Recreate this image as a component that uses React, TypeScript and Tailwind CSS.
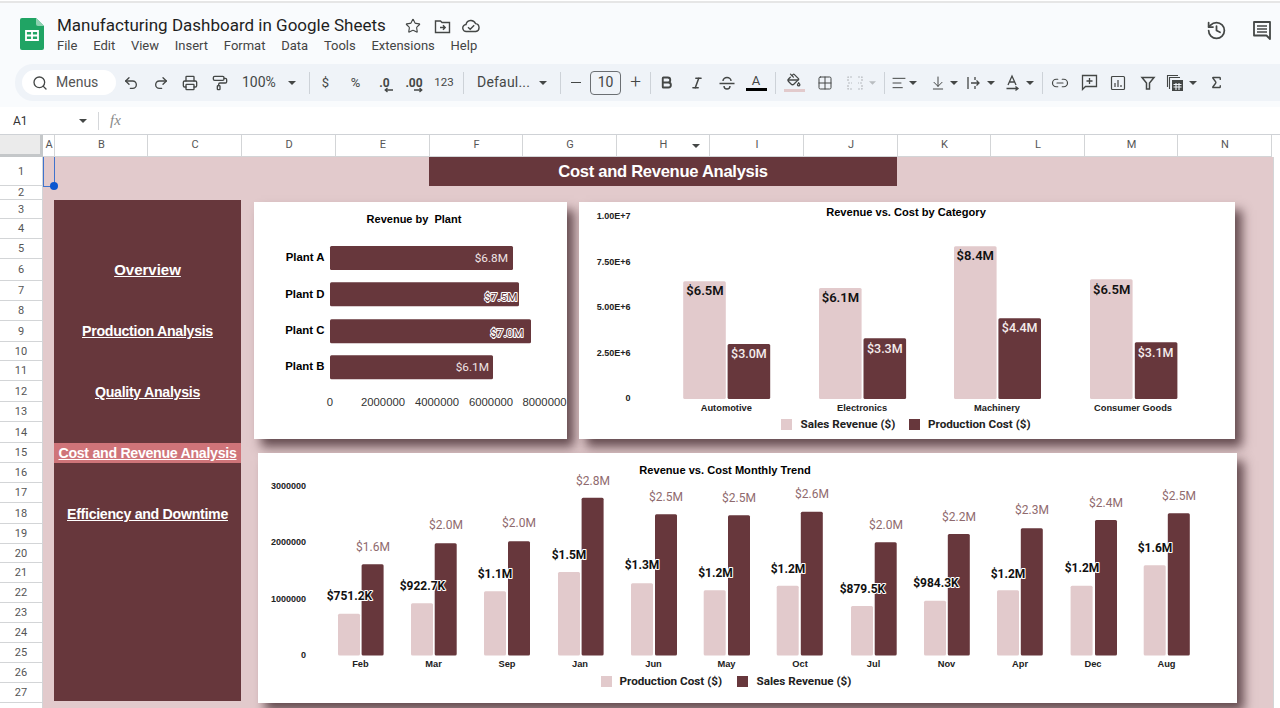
import React from "react";
import { Search, Undo2, Redo2, Printer, PaintRoller, Bold, Italic, Grid2x2, AlignLeft, ArrowDownToLine, Link2, Sigma, Star, History, PaintBucket } from "lucide-react";

const MAROON = "#67373c";
const PINK = "#e2cacc";
const ink = "#444746";

const Caret = () => (
  <svg width="8" height="4" viewBox="0 0 8 4" className="shrink-0"><polygon points="0,0 8,0 4,4" fill={ink} /></svg>
);
const Sep = () => <div className="w-px h-[22px] bg-[#cdd2d8] shrink-0" />;

const sic = { size: 16, color: ink, strokeWidth: 2 };

const StrikeIcon = () => (
  <svg width="18" height="16" viewBox="0 0 18 16" fill="none" stroke={ink} strokeWidth="1.4"><path d="M5 6a4 3.5 0 0 1 8 0M1.5 8.5h15M6 11a3 3 0 0 0 6 0" /></svg>
);
const MergeIcon = () => (
  <svg width="16" height="16" viewBox="0 0 16 16" fill="none" stroke="#b9bdc1" strokeWidth="1.2"><path d="M1 6V2h5M15 6V2h-5M1 10v4h5M15 10v4h-5M1 8h4M15 8h-4" strokeDasharray="2 1" /></svg>
);
const WrapIcon = () => (
  <svg width="16" height="16" viewBox="0 0 16 16" fill="none" stroke={ink} strokeWidth="1.3"><path d="M2 2v12M9 2v3M9 11v3M5 8h8M10.5 5.5 13 8l-2.5 2.5" /></svg>
);
const RotateIcon = () => (
  <svg width="16" height="18" viewBox="0 0 16 18" fill="none" stroke={ink} strokeWidth="1.3"><path d="M3 11 7 2l4 9M4.5 8h5M1.5 14.5h11M10.5 12.5l2.5 2-2.5 2" /></svg>
);
const CommentPlus = () => (
  <svg width="17" height="18" viewBox="0 0 17 18" fill="none" stroke={ink} strokeWidth="1.3"><path d="M1.5 1.5h14v11h-11l-3 3zM8.5 4v6M5.5 7h6" /></svg>
);
const ChartIcon = () => (
  <svg width="16" height="16" viewBox="0 0 16 16" fill="none" stroke={ink} strokeWidth="1.2"><rect x="1.5" y="1.5" width="13" height="13" rx="1" /><path d="M5 8v4M8 5v7M11 10v2" /></svg>
);
const FilterIcon = () => (
  <svg width="16" height="16" viewBox="0 0 16 16" fill="none" stroke={ink} strokeWidth="1.5"><path d="M2 2.5h12L9.5 8v6h-3V8z" /></svg>
);
const FnIcon = () => (
  <svg width="19" height="18" viewBox="0 0 19 18" fill="none" stroke={ink} strokeWidth="1.1"><path d="M1.5 13V1.5H12" /><path d="M3.5 15V3.5H14" /><rect x="6" y="6" width="11" height="11" fill={ink} stroke="none" /><path d="M7.5 10.5h8M7.5 13h8M10 9v7M13 9v7" stroke="#eff3f8" /></svg>
);
const FolderMove = () => (
  <svg width="17" height="15" viewBox="0 0 17 15" fill="none" stroke={ink} strokeWidth="1.4"><path d="M1.5 2h5l1.5 1.5h7.5v10h-14zM6 8.5h5M9 6.2l2.2 2.3L9 10.8" /></svg>
);
const CloudOk = () => (
  <svg width="18" height="14" viewBox="0 0 18 14" fill="none" stroke={ink} strokeWidth="1.4"><path d="M4.5 12.5a3.5 3.5 0 0 1-.5-7A5 5 0 0 1 13.5 4.6a4 4 0 0 1 .3 7.9zM6 8.2l2.2 2.1 4-4" /></svg>
);
const CommentBox = () => (
  <svg width="20" height="20" viewBox="0 0 20 20" fill="none" stroke={ink} strokeWidth="1.8"><path d="M2 2h16v17l-3.5-3.5H2z" strokeLinejoin="round" /><path d="M5 6h10M5 9h10M5 12h10" strokeWidth="1.4" /></svg>
);
const SheetsLogo = () => (
  <svg width="24" height="32" viewBox="0 0 24 32" className="shrink-0">
    <path d="M2 0h14l8 8v22a2 2 0 0 1-2 2H2a2 2 0 0 1-2-2V2a2 2 0 0 1 2-2z" fill="#20a464" />
    <path d="M16 0l8 8h-6a2 2 0 0 1-2-2z" fill="#8ed1b1" />
    <path d="M6 13h12v9H6zM6 17.5h12M12 13v9" fill="none" stroke="#fff" strokeWidth="1.8" />
  </svg>
);
const ArrowL = () => (
  <svg width="9" height="6" viewBox="0 0 9 6" className="absolute left-[5px] top-[10px]" fill="none" stroke={ink} strokeWidth="1.3"><path d="M9 3H1.5M3.5 1 1.2 3l2.3 2" /></svg>
);
const ArrowR = () => (
  <svg width="9" height="6" viewBox="0 0 9 6" className="absolute left-[9px] top-[10px]" fill="none" stroke={ink} strokeWidth="1.3"><path d="M0 3h7.5M5.5 1l2.3 2-2.3 2" /></svg>
);

const Btn = ({ w, children, className = "" }: { w: string; children?: React.ReactNode; className?: string }) => (
  <div className={`flex items-center justify-center shrink-0 ${w} ${className}`}>{children}</div>
);

function Toolbar() {
  return (
    <div className="flex items-center h-[37px] mt-[1px] ml-[15px] bg-[#eff3f8] rounded-l-[18px] pl-[7px] text-[#444746]">
      <div className="flex items-center w-[94px] h-[25px] bg-white rounded-full pl-[10px] gap-[8px] shrink-0">
        <Search size={16} color={ink} strokeWidth={2} />
        <span className="text-[14px] text-[#555]">Menus</span>
      </div>
      <Btn w="w-[30px]"><Undo2 {...sic} /></Btn>
      <Btn w="w-[29px]"><Redo2 {...sic} /></Btn>
      <Btn w="w-[30px]"><Printer {...sic} /></Btn>
      <Btn w="w-[29px]"><PaintRoller {...sic} /></Btn>
      <div className="flex items-center w-[75px] pl-[8px] shrink-0">
        <span className="text-[14px] w-[46px]">100%</span>
        <Caret />
      </div>
      <Sep />
      <Btn w="w-[31px]" className="text-[13px]">$</Btn>
      <Btn w="w-[29px]" className="text-[13px]">%</Btn>
      <Btn w="w-[29px]" className="text-[12px] font-bold leading-none">
        <span className="relative">.0<ArrowL /></span>
      </Btn>
      <Btn w="w-[30px]" className="text-[12px] font-bold leading-none">
        <span className="relative">.00<ArrowR /></span>
      </Btn>
      <Btn w="w-[30px]" className="text-[11.5px]">123</Btn>
      <div className="w-[4px] shrink-0" />
      <Sep />
      <div className="flex items-center w-[96px] pl-[13px] shrink-0">
        <span className="text-[14px] w-[62px] tracking-[0.2px]">Defaul...</span>
        <Caret />
      </div>
      <Sep />
      <Btn w="w-[29px]"><span className="w-[10px] h-[1.5px] bg-[#444746]" /></Btn>
      <div className="flex items-center justify-center w-[31px] h-[24px] border border-[#6b6f73] rounded-[4px] text-[14px] shrink-0">10</div>
      <Btn w="w-[29px]" className="text-[19px] font-light">+</Btn>
      <Sep />
      <Btn w="w-[31px]"><Bold size={15} color={ink} strokeWidth={3} /></Btn>
      <Btn w="w-[30px]"><Italic size={14} color={ink} strokeWidth={2.6} /></Btn>
      <Btn w="w-[29px]"><StrikeIcon /></Btn>
      <Btn w="w-[30px]" className="flex-col">
        <span className="text-[13px] leading-[13px]">A</span>
        <span className="w-[21px] h-[3px] bg-black mt-[1px]" />
      </Btn>
      <div className="w-[4px] shrink-0" />
      <Sep />
      <Btn w="w-[36px]" className="flex-col">
        <PaintBucket size={14} color={ink} strokeWidth={2.2} />
        <span className="w-[21px] h-[3px] bg-[#e2cacc] mt-[2px]" />
      </Btn>
      <Btn w="w-[26px]"><Grid2x2 {...sic} strokeWidth={1.5} /></Btn>
      <div className="flex items-center w-[46px] pl-[9px] gap-[6px] shrink-0">
        <MergeIcon />
        <svg width="7" height="4" viewBox="0 0 8 4"><polygon points="0,0 8,0 4,4" fill="#b9bdc1" /></svg>
      </div>
      <Sep />
      <div className="flex items-center w-[41px] pl-[6px] gap-[2px] shrink-0"><AlignLeft {...sic} strokeWidth={1.5} /><Caret /></div>
      <div className="flex items-center w-[37px] pl-[4px] gap-[4px] shrink-0"><ArrowDownToLine {...sic} strokeWidth={1.5} /><Caret /></div>
      <div className="flex items-center w-[37px] pl-[3px] gap-[5px] shrink-0"><WrapIcon /><Caret /></div>
      <div className="flex items-center w-[42px] pl-[5px] gap-[5px] shrink-0"><RotateIcon /><Caret /></div>
      <Sep />
      <Btn w="w-[33px]"><Link2 size={18} color={ink} strokeWidth={1.6} /></Btn>
      <Btn w="w-[27px]"><CommentPlus /></Btn>
      <Btn w="w-[29px]"><ChartIcon /></Btn>
      <Btn w="w-[31px]"><FilterIcon /></Btn>
      <div className="flex items-center w-[43px] pl-[3px] gap-[4px] shrink-0"><FnIcon /><Caret /></div>
      <Btn w="w-[20px]"><Sigma size={15} color={ink} strokeWidth={2.2} /></Btn>
    </div>
  );
}

const cols: [string, string][] = [["A", "w-[12px]"], ["B", "w-[93px]"], ["C", "w-[94px]"], ["D", "w-[94px]"], ["E", "w-[94px]"], ["F", "w-[93px]"], ["G", "w-[94px]"], ["H", "w-[93px]"], ["I", "w-[94px]"], ["J", "w-[94px]"], ["K", "w-[93px]"], ["L", "w-[94px]"], ["M", "w-[93px]"], ["N", "w-[94px]"]];

function ColumnHeader() {
  return (
    <div className="flex h-[23px] bg-white border-t border-[#cfd2d6] text-[11px] text-[#555]">
      <div className="w-[43px] bg-[#ebebeb] border-r-[3px] border-b-[3px] border-[#c4c7c9] shrink-0" />
      {cols.map(([c, w]) => (
        <div key={c} className={`relative flex items-center justify-center shrink-0 pl-[1px] border-r border-b border-[#d3d5d7] ${w}`}>
          {c}
          {c === "H" && <span className="absolute right-[9px] top-[9px]"><Caret /></span>}
        </div>
      ))}
    </div>
  );
}

const rowH = [29, 14, 19, 20, 20, 22, 20, 20, 21, 19, 20, 21, 20, 21, 20, 20, 20, 21, 20, 19, 20, 20, 20, 20, 20, 20, 20, 6];
const rowCls: Record<number, string> = { 29: "h-[29px]", 14: "h-[14px]", 19: "h-[19px]", 20: "h-[20px]", 21: "h-[21px]", 22: "h-[22px]", 6: "h-[6px]" };

function RowHeader() {
  return (
    <div className="w-[43px] shrink-0 flex flex-col bg-white border-r border-[#d3d5d7] text-[11px] text-[#555]">
      {rowH.map((h, i) => (
        <div key={i} className={`flex items-center justify-center pt-[2px] border-b border-[#d3d5d7] shrink-0 ${rowCls[h]}`}>
          {i < 27 ? i + 1 : ""}
        </div>
      ))}
    </div>
  );
}

type TProps = { x: number; y: number; s: string; size?: number; w?: number; fill?: string; a?: "start" | "middle" | "end"; arial?: boolean; halo?: string; sw?: number };
const T = ({ x, y, s, size = 11, w = 400, fill = "#000", a = "middle", arial = false, halo, sw = 2.5 }: TProps) => (
  <text x={x} y={y} fontSize={size} fontWeight={w} fill={fill} textAnchor={a} dominantBaseline="central" xmlSpace="preserve"
    fontFamily={arial ? "'Liberation Sans', Arial, sans-serif" : "Roboto, sans-serif"}
    stroke={halo} strokeWidth={halo ? sw : undefined} paintOrder="stroke" strokeLinejoin="round">{s}</text>
);
const Bar = ({ x, y, w, h, fill }: { x: number; y: number; w: number; h: number; fill: string }) => (
  <rect x={x} y={y} width={w} height={h} rx="1.5" fill={fill} />
);

function PlantChart() {
  const rows = [
    { n: "Plant A", r: 513, y: 246, v: "$6.8M", vx: 508, vy: 258, ly: 257 },
    { n: "Plant D", r: 519, y: 282.3, v: "$7.5M", vx: 517.5, vy: 297, ly: 294, out: true },
    { n: "Plant C", r: 531, y: 319.3, v: "$7.0M", vx: 523.5, vy: 332.7, ly: 330, out: true },
    { n: "Plant B", r: 493, y: 355.3, v: "$6.1M", vx: 489, vy: 366.7, ly: 366 },
  ];
  return (
    <svg viewBox="254 202 313 237" width="313" height="237" className="block">
      <T x={414} y={219} s="Revenue by  Plant" size={11} w={700} arial />
      {rows.map((r) => (
        <g key={r.n}>
          <T x={324.5} y={r.ly} s={r.n} size={11.4} w={700} a="end" arial />
          <Bar x={330} y={r.y} w={r.r - 330} h={24} fill={MAROON} />
          {r.out
            ? <T x={r.vx} y={r.vy} s={r.v} size={11.8} fill={MAROON} a="end" halo="#fff" sw={2} />
            : <T x={r.vx} y={r.vy} s={r.v} size={11.8} fill="#f0e4e5" a="end" />}
        </g>
      ))}
      {[[330, "0"], [383, "2000000"], [437, "4000000"], [491, "6000000"], [544.5, "8000000"]].map(([x, s]) => (
        <T key={s as string} x={x as number} y={402} s={s as string} size={11.3} fill="#333" arial />
      ))}
    </svg>
  );
}

function CategoryChart() {
  const groups = [
    { n: "Automotive", cx: 726.3, p: 683.2, m: 727.6, pt: 281.3, mt: 344, pv: "$6.5M", pc: 705, py: 290, mv: "$3.0M", mc: 748.9, my: 353 },
    { n: "Electronics", cx: 862, p: 819, m: 863.5, pt: 288, mt: 338.3, pv: "$6.1M", pc: 840.4, py: 297, mv: "$3.3M", mc: 884.8, my: 348 },
    { n: "Machinery", cx: 997, p: 954, m: 998.4, pt: 246.3, mt: 318.3, pv: "$8.4M", pc: 975.3, py: 255, mv: "$4.4M", mc: 1019.7, my: 327 },
    { n: "Consumer Goods", cx: 1133, p: 1090, m: 1134.8, pt: 279.3, mt: 342.3, pv: "$6.5M", pc: 1111.7, py: 289, mv: "$3.1M", mc: 1155.6, my: 352 },
  ];
  return (
    <svg viewBox="579 202 656 237" width="656" height="237" className="block">
      <T x={906} y={212} s="Revenue vs. Cost by Category" size={11.1} w={700} arial />
      {[[216, "1.00E+7"], [262, "7.50E+6"], [307, "5.00E+6"], [353, "2.50E+6"], [398, "0"]].map(([y, s]) => (
        <T key={s as string} x={630.5} y={y as number} s={s as string} size={9} w={700} a="end" arial fill="#222" />
      ))}
      {groups.map((g) => (
        <g key={g.n}>
          <Bar x={g.p} y={g.pt} w={42.6} h={399 - g.pt} fill={PINK} />
          <Bar x={g.m} y={g.mt} w={42.6} h={399 - g.mt} fill={MAROON} />
          <T x={g.pc} y={g.py} s={g.pv} size={13} w={600} fill="#111" />
          <T x={g.mc} y={g.my} s={g.mv} size={12.5} w={500} fill="#f5ecec" />
          <T x={g.cx} y={408} s={g.n} size={9.3} w={700} arial fill="#222" />
        </g>
      ))}
      <rect x={781} y={419} width={11} height={11} fill={PINK} />
      <T x={800.5} y={424} s="Sales Revenue ($)" size={11.7} w={700} a="start" fill="#222" />
      <rect x={909} y={419} width={11} height={11} fill={MAROON} />
      <T x={928} y={424} s="Production Cost ($)" size={11.7} w={700} a="start" fill="#222" />
    </svg>
  );
}

function MonthlyChart() {
  const d: [string, number, number, number, number, string, number, number, string, number, number, number][] = [
    ["Feb", 338, 613.7, 361.6, 564.3, "$751.2K", 349.4, 596, "$1.6M", 373, 547, 360.4],
    ["Mar", 411, 603.3, 434.7, 543.3, "$922.7K", 422.4, 586, "$2.0M", 446, 525, 433.5],
    ["Sep", 484, 591.3, 508, 541.3, "$1.1M", 495, 574, "$2.0M", 519, 523, 507],
    ["Jan", 558, 572, 581.6, 497.7, "$1.5M", 569, 554.7, "$2.8M", 593, 481, 580],
    ["Jun", 631, 583.3, 655, 514.3, "$1.3M", 642, 565.3, "$2.5M", 666, 497, 653.5],
    ["May", 703.7, 590.3, 728, 515.3, "$1.2M", 715.5, 573, "$2.5M", 739, 498, 726.5],
    ["Oct", 776.7, 585.7, 800.8, 511.7, "$1.2M", 788, 569, "$2.6M", 812, 494, 800],
    ["Jul", 851, 606, 874.7, 542.3, "$879.5K", 862.4, 589, "$2.0M", 886, 525, 873.5],
    ["Nov", 924, 600.7, 947.8, 534, "$984.3K", 936, 583, "$2.2M", 959, 517, 946.5],
    ["Apr", 997, 590.3, 1020.8, 528.3, "$1.2M", 1008, 573.7, "$2.3M", 1032, 510, 1020],
    ["Dec", 1070.6, 585.7, 1095, 520, "$1.2M", 1082, 568, "$2.4M", 1106, 503, 1093],
    ["Aug", 1143.7, 565.3, 1167.8, 513.3, "$1.6M", 1155, 548, "$2.5M", 1179, 496, 1166.5],
  ];
  return (
    <svg viewBox="258 453 979 250" width="979" height="250" className="block">
      <T x={725} y={470} s="Revenue vs. Cost Monthly Trend" size={11.1} w={700} arial />
      {[[486, "3000000"], [542, "2000000"], [599, "1000000"], [655, "0"]].map(([y, s]) => (
        <T key={s as string} x={306} y={y as number} s={s as string} size={9} w={700} a="end" arial fill="#222" />
      ))}
      {d.map(([n, px, pt, mx, mt, pv, pc, py, mv, mc, my, lx]) => (
        <g key={n}>
          <Bar x={px} y={pt} w={22} h={655.5 - pt} fill={PINK} />
          <Bar x={mx} y={mt} w={22} h={655.5 - mt} fill={MAROON} />
          <T x={mc} y={my} s={mv} size={12} fill="#8f6a6e" />
          <T x={pc} y={py} s={pv} size={12} w={700} fill="#111" halo="#fff" sw={2} />
          <T x={lx} y={664} s={n} size={9.3} w={700} arial fill="#222" />
        </g>
      ))}
      <rect x={601} y={676} width={11} height={11} fill={PINK} />
      <T x={619.5} y={681} s="Production Cost ($)" size={11.7} w={700} a="start" fill="#222" />
      <rect x={737} y={676} width={11} height={11} fill={MAROON} />
      <T x={756.5} y={681} s="Sales Revenue ($)" size={11.7} w={700} a="start" fill="#222" />
    </svg>
  );
}

const nav = ["Overview", "Production Analysis", "Quality Analysis", "Cost and Revenue Analysis", "Efficiency and Downtime"];
const shadow = "shadow-[7px_8px_10px_rgba(60,35,40,0.75)]";

export default function App() {
  return (
    <div className="w-[1280px] h-[708px] overflow-hidden bg-white flex flex-col font-[Roboto,sans-serif]">
      <div className="h-[107px] bg-[#f9fbfd] shrink-0 flex flex-col">
        <div className="h-[3px] border-b-[2px] border-[#e6e6e6] bg-white shrink-0" />
        <div className="flex h-[60px] shrink-0 pt-[15px] pl-[20px] pr-[8px]">
          <SheetsLogo />
          <div className="ml-[13px] flex flex-col">
            <div className="flex items-center h-[20px] mt-[-2px]">
              <span className="text-[17px] text-[#1f1f1f] w-[348px] whitespace-nowrap">Manufacturing Dashboard in Google Sheets</span>
              <Star size={16} color={ink} strokeWidth={1.7} />
              <span className="ml-[13px]"><FolderMove /></span>
              <span className="ml-[11px]"><CloudOk /></span>
            </div>
            <div className="flex gap-[15.75px] text-[13px] leading-[16px] text-[#444] mt-[2px] whitespace-nowrap">
              {["File", "Edit", "View", "Insert", "Format", "Data", "Tools", "Extensions", "Help"].map((m) => <span key={m}>{m}</span>)}
            </div>
          </div>
          <div className="ml-auto flex items-start gap-[25px] pt-[2px]">
            <History size={21} color={ink} strokeWidth={2} />
            <CommentBox />
          </div>
        </div>
        <Toolbar />
      </div>
      <div className="h-[27px] flex items-center bg-white shrink-0 text-[12px] text-[#333]">
        <span className="w-[79px] pl-[13px]">A1</span>
        <Caret />
        <div className="w-px h-[18px] bg-[#d5d7da] ml-[11px]" />
        <span className="ml-[11px] font-['Liberation_Serif',serif] italic text-[15px] text-[#888]">fx</span>
      </div>
      <ColumnHeader />
      <div className="flex flex-1 min-h-0 overflow-hidden">
        <RowHeader />
        <div className="relative w-[1230px] shrink-0 bg-[#e2cacc] flex flex-col">
          <div className="absolute left-0 top-0 w-[12px] h-[30px] border-l border-r-[1.5px] border-b-[1.5px] border-[#3f73cc]" />
          <div className="absolute left-[7px] top-[25px] w-[8px] h-[8px] rounded-full bg-[#0b57d0]" />
          <div className="ml-[386px] w-[468px] h-[29px] pt-[2px] bg-[#67373c] flex items-center justify-center text-white text-[16.6px] tracking-[-0.3px] font-bold font-['Liberation_Sans',sans-serif] shrink-0">
            Cost and Revenue Analysis
          </div>
          <div className="flex mt-[14px] ml-[11px]">
            <div className="w-[187px] h-[501px] bg-[#67373c] shrink-0 flex flex-col gap-[41px] pt-[60px] font-['Liberation_Sans',sans-serif] font-bold text-white">
              {nav.map((n, i) => (
                <div key={n} className={`h-[20px] pt-[1px] flex items-center justify-center underline whitespace-nowrap ${i === 0 ? "text-[15px]" : "text-[14.2px] tracking-[-0.3px]"} ${i === 3 ? "bg-[#cf7479]" : ""}`}>{n}</div>
              ))}
            </div>
            <div className="ml-[13px] mt-[2px] flex flex-col">
              <div className="flex gap-[12px]">
                <div className={`bg-white ${shadow}`}><PlantChart /></div>
                <div className={`bg-white ${shadow}`}><CategoryChart /></div>
              </div>
              <div className={`relative ml-[4px] mt-[14px] bg-white w-[979px] ${shadow}`}><MonthlyChart /></div>
            </div>
          </div>
        </div>
        <div className="flex-1 border-l border-[#d3d5d7] bg-white" />
      </div>
    </div>
  );
}
